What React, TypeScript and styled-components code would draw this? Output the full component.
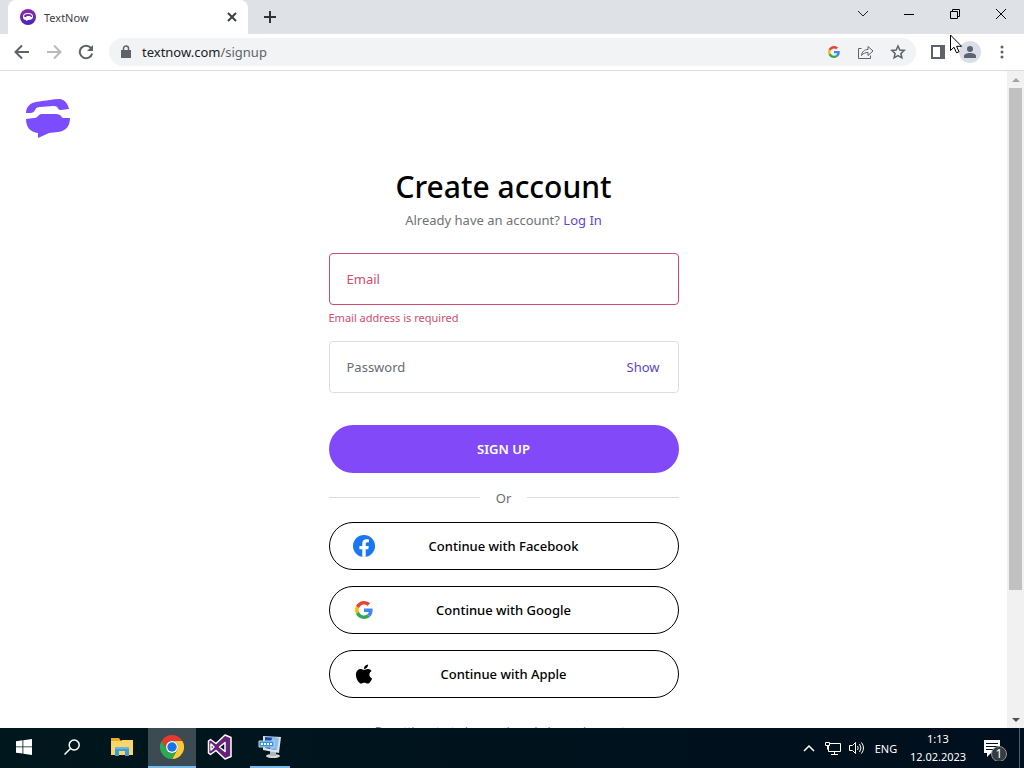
import React, { useId } from "react";
import styled, { createGlobalStyle, css } from "styled-components";
import { FaApple } from "react-icons/fa";

const Global = createGlobalStyle`
  * { box-sizing: border-box; }
  html, body, #root { height: 100%; }
  body { margin: 0; overflow: hidden; font-family: "Noto Sans", "Open Sans", sans-serif; color: #000; background: #fff; }
  button { font: inherit; color: inherit; background: none; border: 0; padding: 0; cursor: pointer; }
  svg { display: block; flex: none; }
`;

const Desktop = styled.div`
  height: 100vh;
  display: flex;
  flex-direction: column;
`;

/* ---------- browser chrome ---------- */
const TabStrip = styled.header`
  height: 34px;
  flex: none;
  display: flex;
  background: #dee1e6;
  padding-left: 8px;
`;

const Tab = styled.div`
  width: 240px;
  background: #fff;
  border-radius: 8px 8px 0 0;
  display: flex;
  align-items: center;
  gap: 8px;
  padding: 0 8px 0 12px;
  font-size: 11px;
  color: #3c4043;
`;

const TabTitle = styled.span`
  flex: 1;
`;

const IconButton = styled.button<{ $size?: number }>`
  width: ${(p) => p.$size ?? 32}px;
  height: ${(p) => p.$size ?? 32}px;
  flex: none;
  display: flex;
  align-items: center;
  justify-content: center;
`;

const NewTab = styled(IconButton)`
  margin-left: 6px;
  align-self: center;
`;

const WindowControls = styled.div`
  margin-left: auto;
  display: flex;
`;

const WindowButton = styled.button`
  width: 46px;
  height: 28px;
  display: flex;
  align-items: center;
  justify-content: center;
`;

const Toolbar = styled.div`
  height: 37px;
  flex: none;
  display: flex;
  align-items: center;
  background: #fff;
  border-bottom: 1px solid #dadce0;
  padding: 0 6px;
`;

const Omnibox = styled.div`
  flex: 1;
  height: 28px;
  margin: 0 6px 0 7px;
  border-radius: 14px;
  background: #f1f3f4;
  display: flex;
  align-items: center;
  padding: 0 2px 0 11px;
  font-size: 13px;
`;

const Address = styled.div`
  flex: 1;
  margin-left: 10px;
  color: #5f6368;
`;

const Host = styled.span`
  color: #202124;
`;

const Avatar = styled.span`
  width: 22px;
  height: 22px;
  border-radius: 50%;
  background: #dadee6;
  display: flex;
  align-items: center;
  justify-content: center;
`;

const Pointer = styled.svg`
  position: absolute;
  top: 34px;
  right: 61px;
`;

/* ---------- page ---------- */
const Viewport = styled.div`
  flex: 1;
  min-height: 0;
  display: flex;
`;

const Page = styled.main`
  flex: 1;
  min-width: 0;
  overflow: hidden;
  background: #fff;
`;

const Brand = styled.a`
  display: block;
  width: 46px;
  margin: 28px 0 0 24px;
`;

const Form = styled.form`
  width: 350px;
  max-width: 100%;
  margin: 28px auto 0;
  display: flex;
  flex-direction: column;
`;

const Heading = styled.h1`
  margin: 0;
  font-size: 30px;
  line-height: 40px;
  font-weight: 500;
  text-align: center;
`;

const Subtitle = styled.p`
  margin: 3px 0 23px;
  font-size: 13px;
  line-height: 20px;
  color: #6f7277;
  text-align: center;
`;

const Link = styled.a`
  color: #6045dc;
  text-decoration: none;
`;

const Field = styled.label<{ $invalid?: boolean }>`
  height: 52px;
  display: flex;
  align-items: center;
  padding: 0 18px 0 17px;
  border: 1px solid ${(p) => (p.$invalid ? "#d1496b" : "#dadde1")};
  border-radius: 4px;
  color: ${(p) => (p.$invalid ? "#d64a6c" : "#696c70")};
`;

const Input = styled.input`
  flex: 1;
  min-width: 0;
  border: 0;
  outline: 0;
  padding: 0;
  background: none;
  font: inherit;
  font-size: 13px;
  color: inherit;
  &::placeholder { color: inherit; opacity: 1; }
`;

const ShowButton = styled.button`
  font-size: 13px;
  color: #6045c8;
`;

const ErrorText = styled.p`
  margin: 5px 0 15px;
  font-size: 11px;
  line-height: 16px;
  color: #d64a6c;
`;

const pill = css`
  height: 48px;
  border-radius: 24px;
  font-size: 13px;
`;

const SubmitButton = styled.button`
  ${pill}
  margin-top: 32px;
  font-weight: 600;
  background: #8149f8;
  color: #fff;
`;

const Divider = styled.div`
  height: 49px;
  display: flex;
  align-items: center;
  gap: 16px;
  font-size: 13px;
  color: #696c70;
  &::before, &::after {
    content: "";
    flex: 1;
    height: 1px;
    background: #dadde1;
  }
`;

const SocialList = styled.div`
  display: flex;
  flex-direction: column;
  gap: 16px;
`;

const SocialButton = styled.button`
  ${pill}
  font-weight: 500;
  border: 1px solid #000;
  display: grid;
  grid-template-columns: 24px 1fr 24px;
  align-items: center;
  justify-items: center;
  padding: 0 22px;
`;

const Legal = styled.p`
  margin: 23px 0 0;
  font-size: 11px;
  line-height: 20px;
  color: #6f7277;
  text-align: center;
`;

const Scrollbar = styled.div`
  width: 17px;
  background: #f1f1f1;
  display: flex;
  flex-direction: column;
  align-items: center;
`;

const ScrollArrow = styled(IconButton)`
  width: 17px;
  height: 17px;
`;

const ScrollTrack = styled.div`
  flex: 1;
  width: 13px;
  display: grid;
  grid-template-rows: 29fr 7fr;
`;

const ScrollThumb = styled.div`
  background: #c1c1c1;
`;

/* ---------- taskbar ---------- */
const Taskbar = styled.footer`
  height: 40px;
  flex: none;
  display: flex;
  background: linear-gradient(90deg, #00171d, #000f1d);
  color: #fff;
`;

const TaskButton = styled.button<{ $active?: boolean; $running?: boolean; $width?: number }>`
  width: ${(p) => p.$width ?? 48}px;
  margin: 0 ${(p) => (p.$running ? 6 : 0)}px;
  display: flex;
  align-items: center;
  justify-content: center;
  background: ${(p) => (p.$active ? "#3b4b51" : "transparent")};
  border-bottom: 2px solid ${(p) => (p.$active || p.$running ? "#76b9ed" : "transparent")};
`;

const Tray = styled.div`
  margin-left: auto;
  display: flex;
  align-items: center;
  font-size: 11px;
`;

const TrayButton = styled.button<{ $width: number }>`
  width: ${(p) => p.$width}px;
  height: 40px;
  display: flex;
  align-items: center;
  justify-content: center;
`;

const Clock = styled.time`
  width: 70px;
  text-align: center;
  line-height: 18px;
`;

const DesktopEdge = styled.span`
  width: 5px;
  height: 40px;
  border-left: 1px solid #52606a;
`;

const GoogleG = ({ size }: { size: number }) => (
  <svg width={size} height={size} viewBox="0 0 48 48">
    <path fill="#EA4335" d="M24 9.5c3.5 0 6.700 1.200 9.200 3.600l6.900-6.900C35.900 2.400 30.500 0 24 0 14.600 0 6.500 5.400 2.600 13.200l8 6.200C12.400 13.700 17.700 9.500 24 9.500z" />
    <path fill="#4285F4" d="M47 24.500c0-1.600-.2-3.100-.4-4.500H24v9h12.900c-.6 3-2.200 5.500-4.700 7.200l7.700 6C44.400 38 47 31.800 47 24.500z" />
    <path fill="#FBBC05" d="M10.500 28.600c-.5-1.500-.8-3-.8-4.600s.3-3.100.8-4.600l-8-6.200C.9 16.500 0 20.100 0 24s.9 7.500 2.600 10.800z" />
    <path fill="#34A853" d="M24 48c6.500 0 11.900-2.100 15.900-5.800l-7.700-6c-2.200 1.500-4.900 2.300-8.200 2.300-6.300 0-11.600-4.200-13.500-9.900l-8 6.200C6.500 42.600 14.600 48 24 48z" />
  </svg>
);

const PhoneMark = ({ width, color }: { width: number; color: string }) => (
  <svg width={width} viewBox="0 0 46 40" fill={color}>
    <path d="M2 14C2 8 6 4 12 3 20 2 29 0 36 0c5 1 8 5 9 10l-8 1c-3 0-2-1-4-3-1-1-2-1-4-1L16 8c-3 0-4 1-5 3-1 2-2 3-5 3Z" />
    <path d="M2 20l8-1c3 0 3-1 5-3 1-1 2-1 4-1h13c3 0 4 1 5 2 1 2 2 2 4 2h5c0 8-4 13-12 14l-9 1-11 5v-5C6 33 2 28 2 20Z" />
  </svg>
);

const Favicon = () => {
  const id = useId();
  return (
    <svg width="16" height="16" viewBox="0 0 16 16">
      <defs><linearGradient id={id} x1="0" y1="0" x2="0" y2="1"><stop stopColor="#8a2aaa" /><stop offset="1" stopColor="#4727b8" /></linearGradient></defs>
      <circle cx="8" cy="8" r="8" fill={`url(#${id})`} />
      <path fillRule="evenodd" d="M3 7c0-2 2-3 5-3s5 1 5 3v1c0 2-2 3-5 3l-2 1v-1C4 11 3 10 3 8ZM5 8h1l1-1h3l1 1h1c0-2-1-3-4-3S4 6 4 7.500Z" fill="#fff" />
    </svg>
  );
};

const Facebook = () => (
  <svg width="22" height="22" viewBox="0 0 24 24">
    <circle cx="12" cy="12" r="12" fill="#1877f2" />
    <path fill="#fff" d="M16.700 15.500l.5-3.500h-3.300V9.800c0-.9.500-1.900 2-1.900h1.500v-3s-1.400-.2-2.700-.2c-2.800 0-4.600 1.700-4.600 4.700V12H7v3.500h3.100v8.300a12 12 0 0 0 3.800 0v-8.300z" />
  </svg>
);

const Stroke = ({ size = 16, w = 2, color = "#5f6368", d }: { size?: number; w?: number; color?: string; d: string }) => (
  <svg width={size} height={size} viewBox={`0 0 ${size} ${size}`} fill="none" stroke={color} strokeWidth={w}><path d={d} /></svg>
);

const FolderIcon = () => (
  <svg width="22" height="20" viewBox="0 0 22 20">
    <path fill="#e9a92c" d="M0 1h8l2 3h12v14H0z" />
    <path fill="#fbd567" d="M0 4h10l1-1h11v15H0z" />
    <path fill="#3e9bd3" d="M4 19v-9h14v9h-4v-5H8v5z" />
    <path fill="#67b6e4" d="M4 10h14v2H4z" />
  </svg>
);

const ChromeIcon = () => (
  <svg width="24" height="24" viewBox="0 0 48 48">
    <path fill="#e33b2e" d="M3.200 12A24 24 0 0 1 44.800 12H24a12 12 0 0 0-10.400 18z" />
    <path fill="#fcc934" d="M44.800 12A24 24 0 0 1 24 48l10.400-18A12 12 0 0 0 24 12z" />
    <path fill="#2da94f" d="M24 48A24 24 0 0 1 3.200 12l10.400 18a12 12 0 0 0 20.800 0z" />
    <circle cx="24" cy="24" r="12" fill="#fff" />
    <circle cx="24" cy="24" r="9.500" fill="#1a73e8" />
  </svg>
);

const VisualStudioIcon = () => (
  <svg width="26" height="26" viewBox="0 0 26 26">
    <path fill="#68217a" fillRule="evenodd" stroke="#fff" strokeWidth="1.500" strokeLinejoin="round" d="M18 1l6 2.500v19L18 25l-9-8.500-5.500 4L1.500 19V7l2-1.500 5.500 4zM18 8.500L12.500 13l5.500 4.500zM4 10v6l3-3z" />
  </svg>
);

const ComputerIcon = () => (
  <svg width="24" height="24" viewBox="0 0 24 24">
    <ellipse cx="15" cy="21" rx="7" ry="2" fill="#d5d8d9" />
    <path fill="#aeb6bb" d="M12 16h6v5h-6z" />
    <path fill="#d9e3e8" d="M5 1l18 1-2 16-16-3z" />
    <path fill="#1746bd" d="M7 2l13 1-2 12-11-2z" />
    <path fill="#8fbcf0" d="M14 2.500l7 .5-2 12-7-1z" />
    <path fill="#3994cf" stroke="#b7d9ed" d="M1 6h15v6H1z" />
    <path stroke="#fff" strokeWidth="2" strokeDasharray="2 1" d="M3 9h12" />
  </svg>
);

export default function App() {
  return (
    <>
      <Global />
      <Desktop>
        <TabStrip>
          <Tab>
            <Favicon />
            <TabTitle>TextNow</TabTitle>
            <IconButton $size={16} aria-label="Close tab"><Stroke size={10} w={2} color="#3c4043" d="M1 1l8 8M9 1l-8 8" /></IconButton>
          </Tab>
          <NewTab $size={32} aria-label="New tab"><Stroke size={12} color="#303236" d="M6 0v12M0 6h12" /></NewTab>
          <WindowControls>
            <WindowButton aria-label="Search tabs"><Stroke size={12} w={1} color="#222" d="M1 3l5 5 5-5" /></WindowButton>
            <WindowButton aria-label="Minimize"><Stroke size={10} w={1} color="#000" d="M0 5.500h10" /></WindowButton>
            <WindowButton aria-label="Restore"><Stroke size={10} w={1} color="#000" d="M.5 2.500h7v7h-7zM2.500 2.500v-2h7v7h-2" /></WindowButton>
            <WindowButton aria-label="Close"><Stroke size={10} w={1} color="#000" d="M0 0l10 10M10 0L0 10" /></WindowButton>
          </WindowControls>
        </TabStrip>
        <Toolbar>
          <IconButton aria-label="Back"><Stroke d="M15 8H2M8 1.500L1.500 8 8 14.500" /></IconButton>
          <IconButton aria-label="Forward"><Stroke color="#b7b9bc" d="M1 8h13M8 1.500L14.500 8 8 14.500" /></IconButton>
          <IconButton aria-label="Reload">
            <svg width="16" height="16" viewBox="0 0 16 16"><path fill="none" stroke="#5f6368" strokeWidth="2" d="M13 4a6.300 6.300 0 1 0 1.200 5.500" /><path fill="#5f6368" d="M15 1v6H9z" /></svg>
          </IconButton>
          <Omnibox>
            <svg width="12" height="14" viewBox="0 0 12 14"><path fill="#5f6368" d="M1 5h10v8H1z" /><path fill="none" stroke="#5f6368" strokeWidth="1.500" d="M3.500 6V3.500a2.500 2.500 0 0 1 5 0V6" /></svg>
            <Address><Host>textnow.com</Host>/signup</Address>
            <IconButton aria-label="Google"><GoogleG size={12} /></IconButton>
            <IconButton aria-label="Share"><Stroke w={1} d="M3.500 4.500h-3v10h12v-3M3.500 11.500c.5-4 3-6 6.500-6V2.500l5 4.500-5 4.500v-3c-3 0-5 1-6.500 3z" /></IconButton>
            <IconButton aria-label="Bookmark"><Stroke w={1.5} d="M8 2l1.800 4 4.400.4-3.300 3 1 4.400L8 11.500l-3.900 2.300 1-4.400-3.300-3L6.200 6z" /></IconButton>
          </Omnibox>
          <IconButton aria-label="Side panel"><svg width="14" height="14" viewBox="0 0 14 14"><path fill="#5f6368" fillRule="evenodd" d="M0 0h14v14H0zM2 2v10h7V2z" /></svg></IconButton>
          <IconButton aria-label="Profile"><Avatar><svg width="14" height="14" viewBox="0 0 14 14" fill="#5b6270"><circle cx="7" cy="4" r="3" /><path d="M1 13v-2c0-4 12-4 12 0v2z" /></svg></Avatar></IconButton>
          <IconButton aria-label="Menu"><svg width="4" height="14" viewBox="0 0 4 14" fill="#5f6368"><circle cx="2" cy="2" r="1.500" /><circle cx="2" cy="7" r="1.500" /><circle cx="2" cy="12" r="1.500" /></svg></IconButton>
        </Toolbar>
        <Viewport>
          <Page>
            <Brand href="#" aria-label="TextNow"><PhoneMark width={46} color="#7c4dff" /></Brand>
            <Form onSubmit={(e) => e.preventDefault()} noValidate>
              <Heading>Create account</Heading>
              <Subtitle>Already have an account? <Link href="#login">Log In</Link></Subtitle>
              <Field $invalid><Input type="email" placeholder="Email" aria-label="Email" aria-invalid aria-describedby="email-error" /></Field>
              <ErrorText id="email-error">Email address is required</ErrorText>
              <Field><Input type="password" placeholder="Password" aria-label="Password" /><ShowButton type="button">Show</ShowButton></Field>
              <SubmitButton type="submit">SIGN UP</SubmitButton>
              <Divider>Or</Divider>
              <SocialList>
                <SocialButton type="button"><Facebook /><span>Continue with Facebook</span></SocialButton>
                <SocialButton type="button"><GoogleG size={18} /><span>Continue with Google</span></SocialButton>
                <SocialButton type="button"><FaApple size={22} /><span>Continue with Apple</span></SocialButton>
              </SocialList>
              <Legal>By getting started, you acknowledge and agree to</Legal>
            </Form>
          </Page>
          <Scrollbar>
            <ScrollArrow aria-label="Scroll up"><svg width="8" height="4"><path fill="#a3a3a3" d="M0 4l4-4 4 4z" /></svg></ScrollArrow>
            <ScrollTrack><ScrollThumb /></ScrollTrack>
            <ScrollArrow aria-label="Scroll down"><svg width="8" height="4"><path fill="#505050" d="M0 0l4 4 4-4z" /></svg></ScrollArrow>
          </Scrollbar>
        </Viewport>
        <Taskbar>
          <TaskButton aria-label="Start"><svg width="16" height="16" viewBox="0 0 16 16" fill="#fff"><path d="M0 2.200l6.500-.9v6.200H0zM7.300 1.200L16 0v7.500H7.300zM0 8.300h6.500v6.300L0 13.700zM7.300 8.300H16V16l-8.700-1.200z" /></svg></TaskButton>
          <TaskButton aria-label="Search"><Stroke w={1.5} color="#fff" d="M15.200 6a5 5 0 1 1-10 0 5 5 0 0 1 10 0zM6.500 9.500L.5 15.500" /></TaskButton>
          <TaskButton $width={52} aria-label="File Explorer"><FolderIcon /></TaskButton>
          <TaskButton $active aria-label="Chrome"><ChromeIcon /></TaskButton>
          <TaskButton aria-label="Visual Studio"><VisualStudioIcon /></TaskButton>
          <TaskButton $running $width={40} aria-label="Remote computer"><ComputerIcon /></TaskButton>
          <Tray>
            <TrayButton $width={24} aria-label="Hidden icons"><Stroke size={12} w={1.5} color="#fff" d="M1 9l5-5 5 5" /></TrayButton>
            <TrayButton $width={24} aria-label="Network"><Stroke w={1} color="#fff" d="M5 3.500h10.500v8H3.500V6M9.500 11.500v3M6 14.500h7M.5 2.500h4v3h-4zM2.500 5.500v4" /></TrayButton>
            <TrayButton $width={24} aria-label="Volume"><Stroke w={1} color="#fff" d="M.5 5.500h3l3-3v11l-3-3h-3zM8.500 6q1.500 2 0 4M10.500 4q3 4 0 8M12.500 2.500q4 5.500 0 11" /></TrayButton>
            <TrayButton $width={34}>ENG</TrayButton>
            <Clock dateTime="2023-02-12T01:13">1:13<br />12.02.2023</Clock>
            <TrayButton $width={46} aria-label="1 notification">
              <svg width="26" height="26" viewBox="0 0 26 26"><path fill="#fff" d="M1 5h16v13H8l-4 4v-4H1z" /><path stroke="#00111d" d="M3 8.500h12M3 11.500h12M3 14.500h8" /><circle cx="16" cy="19" r="7.500" fill="#343b42" stroke="#8b9298" /><text x="16" y="23" fill="#fff" fontSize="12" textAnchor="middle">1</text></svg>
            </TrayButton>
            <DesktopEdge />
          </Tray>
        </Taskbar>
      </Desktop>
      <Pointer width="13" height="20" viewBox="0 0 13 20"><path fill="#fff" stroke="#000" d="M.5 1v15.500l3.500-3.300 2.500 5.600 2.500-1-2.400-5.500h5z" /></Pointer>
    </>
  );
}
